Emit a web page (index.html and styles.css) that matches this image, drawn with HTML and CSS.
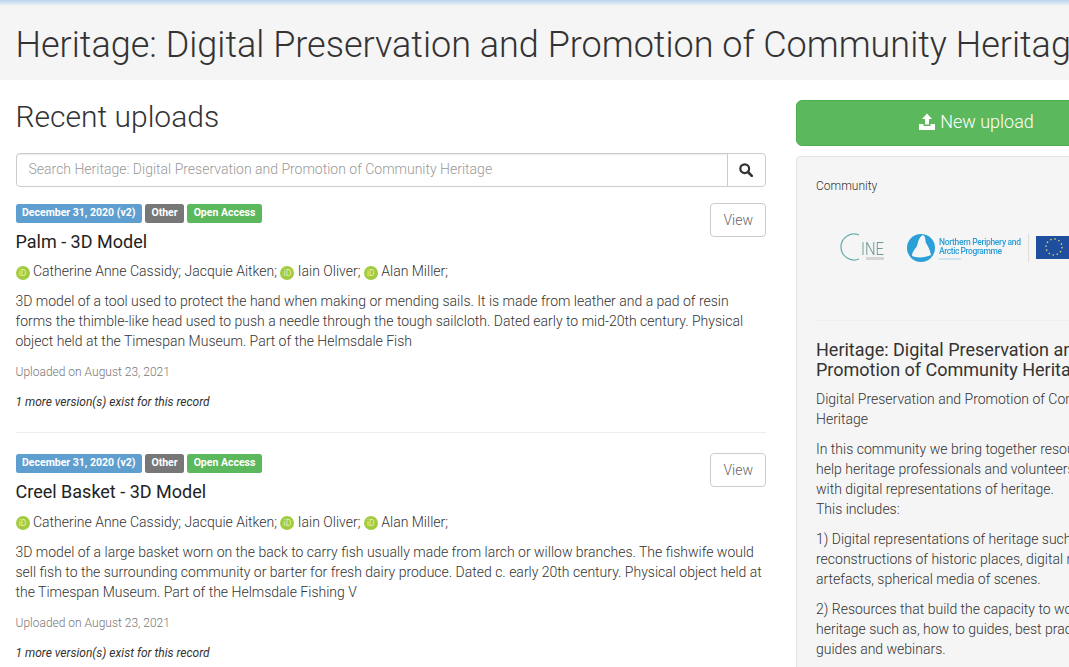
FILE: index.html
```html
<!DOCTYPE html>
<html lang="en">
<head>
  <meta charset="UTF-8">
  <title>Heritage: Digital Preservation and Promotion of Community Heritage</title>
  <link rel="stylesheet" href="styles.css">
</head>
<body>

  <div class="top-line"></div>

  <header class="page-header">
    <h1>Heritage: Digital Preservation and Promotion of Community Heritage</h1>
  </header>

  <div class="container">
    <main class="main-col">
      <h2 class="section-title">Recent uploads</h2>

      <form class="search-group">
        <input class="search-input" type="text" placeholder="Search Heritage: Digital Preservation and Promotion of Community Heritage">
        <button class="search-btn" type="button" aria-label="Search">
          <svg width="14" height="14" viewBox="0 0 14 14"><circle cx="5.7" cy="5.7" r="4.4" fill="none" stroke="#333" stroke-width="2.2"/><path d="M9 9l3.8 3.8" stroke="#333" stroke-width="2.6" stroke-linecap="round"/></svg>
        </button>
      </form>

      <article class="record">
        <div class="record-top">
          <div class="labels">
            <span class="label label-date">December 31, 2020 (v2)</span>
            <span class="label label-type">Other</span>
            <span class="label label-access">Open Access</span>
          </div>
          <a class="view-btn">View</a>
        </div>
        <h4 class="record-title">Palm - 3D Model</h4>
        <p class="authors">
          <span class="orcid">iD</span> Catherine Anne Cassidy; Jacquie Aitken; <span class="orcid">iD</span> Iain Oliver; <span class="orcid">iD</span> Alan Miller;
        </p>
        <p class="description">3D model of a tool used to protect the hand when making or mending sails. It is made from leather and a pad of resin forms the thimble-like head used to push a needle through the tough sailcloth. Dated early to mid-20th century. Physical object held at the Timespan Museum. Part of the Helmsdale Fish</p>
        <p class="uploaded">Uploaded on August 23, 2021</p>
        <p class="versions">1 more version(s) exist for this record</p>
      </article>

      <article class="record">
        <div class="record-top">
          <div class="labels">
            <span class="label label-date">December 31, 2020 (v2)</span>
            <span class="label label-type">Other</span>
            <span class="label label-access">Open Access</span>
          </div>
          <a class="view-btn">View</a>
        </div>
        <h4 class="record-title">Creel Basket - 3D Model</h4>
        <p class="authors">
          <span class="orcid">iD</span> Catherine Anne Cassidy; Jacquie Aitken; <span class="orcid">iD</span> Iain Oliver; <span class="orcid">iD</span> Alan Miller;
        </p>
        <p class="description">3D model of a large basket worn on the back to carry fish usually made from larch or willow branches. The fishwife would sell fish to the surrounding community or barter for fresh dairy produce. Dated c. early 20th century. Physical object held at the Timespan Museum. Part of the Helmsdale Fishing V</p>
        <p class="uploaded">Uploaded on August 23, 2021</p>
        <p class="versions">1 more version(s) exist for this record</p>
      </article>
    </main>

    <aside class="side-col">
      <a class="upload-btn">
        <svg width="18" height="18" viewBox="0 0 18 18"><path d="M9 0.5L14 6H11V11.5H7V6H4Z" fill="#fff"/><path d="M1 11h4.5v2h7v-2H17v6H1Z" fill="#fff"/></svg>
        New upload
      </a>

      <div class="panel">
        <div class="panel-label">Community</div>
        <div class="logos">
          <svg width="260" height="50" viewBox="0 0 260 50">
            <!-- cine logo -->
            <path d="M28 10A13 13 0 1 0 28 34" fill="none" stroke="#6aaeae" stroke-width="1.3"/>
            <text x="30" y="30" class="logo-ine" textLength="23" lengthAdjust="spacingAndGlyphs">INE</text>
            <rect x="35" y="32" width="18" height="3" fill="#d4d6d4"/>
            <!-- npa logo -->
            <circle cx="90" cy="23" r="14" fill="#2a9fd8"/>
            <path d="M92 10c-3 1-5 6-6 11c-2 3-5 6-5 10c4 2 13 2 19-1c-1-5-3-9-5-12c-1-3 0-6-3-8Z" fill="#f5f5f5"/>
            <text x="108" y="20" class="logo-npa" textLength="82">Northern Periphery and</text>
            <text x="108" y="29" class="logo-npa" textLength="63">Arctic Programme</text>
            <rect x="108" y="33" width="22" height="2" fill="#cfe4ee"/>
            <rect x="197" y="9" width="1" height="28" fill="#dedfd9"/>
            <!-- eu flag -->
            <rect x="205" y="11" width="50" height="23" fill="#1d4f9e"/>
            <circle cx="223" cy="22" r="8" fill="none" stroke="#e6d36a" stroke-width="1.4" stroke-dasharray="1.4 2.8"/>
          </svg>
        </div>
        <hr class="panel-rule">
        <h4 class="panel-title">Heritage: Digital Preservation and Promotion of Community Heritage</h4>
        <p>Digital Preservation and Promotion of Community Heritage</p>
        <p>In this community we bring together resources that help heritage professionals and volunteers to work<br>with digital representations of heritage.<br>This includes:</p>
        <p>1) Digital representations of heritage such as 3D reconstructions of historic places, digital models of artefacts, spherical media of scenes.</p>
        <p>2) Resources that build the capacity to work with heritage such as, how to guides, best practice guides and webinars.</p>
      </div>
    </aside>
  </div>

</body>
</html>
```

FILE: styles.css
```css
html, body {
  height: 667px;
  overflow: hidden;
}
body {
  margin: 0;
  font-family: Roboto, "Liberation Sans", sans-serif;
  font-weight: 300;
  font-size: 14px;
  line-height: 20px;
  color: #333;
  background-color: #fff;
}
.top-line {
  height: 6px;
  background: linear-gradient(#b9d4ee, #f5f5f5);
}
.page-header {
  background-color: #f5f5f5;
  height: 74px;
  padding-left: 15.5px;
  overflow: hidden;
  white-space: nowrap;
}
.page-header h1 {
  margin: 0;
  padding-top: 19px;
  font-size: 36px;
  font-weight: 300;
  line-height: 40px;
}
.container {
  display: grid;
  grid-template-columns: 750.5px 360px;
  column-gap: 30px;
  padding: 0 0 0 15.5px;
  width: 1170px;
}
.section-title {
  margin: 20px 0 20px;
  font-size: 30px;
  font-weight: 300;
  line-height: 33px;
}
.search-group {
  display: flex;
  height: 34px;
  margin-bottom: 17px;
}
.search-input {
  flex: 1;
  padding: 5px 12px 7px;
  border: 1px solid #ccc;
  border-radius: 4px 0 0 4px;
  font-family: inherit;
  font-weight: 300;
  font-size: 14px;
  box-shadow: inset 0 1px 1px rgba(0, 0, 0, 0.075);
}
.search-input::placeholder {
  color: #999;
}
.search-btn {
  width: 39px;
  margin-left: -1px;
  border: 1px solid #ccc;
  border-radius: 0 4px 4px 0;
  background-color: #fff;
  display: flex;
  align-items: center;
  justify-content: center;
  padding: 0 2px 1px 0;
}
.record {
  border-bottom: 1px solid #eee;
  margin-bottom: 21px;
  padding-bottom: 20.1px;
}
.record:last-child {
  border-bottom: none;
}
.record-top {
  display: flex;
  justify-content: space-between;
  align-items: flex-start;
  height: 34px;
  margin-top: -1px;
}
.labels {
  display: flex;
  gap: 3px;
  padding-top: 1px;
}
.label {
  display: block;
  height: 18.5px;
  padding: 0 6.5px;
  border-radius: 2.5px;
  color: #fff;
  font-size: 10.5px;
  font-weight: 700;
  line-height: 17.5px;
}
.label-date {
  background-color: #5f9fd0;
}
.label-type {
  background-color: #777;
}
.label-access {
  background-color: #5cb85c;
}
.view-btn {
  display: block;
  box-sizing: border-box;
  height: 34px;
  padding: 6px 12px;
  border: 1px solid #ccc;
  border-radius: 4px;
  color: #666;
  background-color: #fff;
}
.record-title {
  margin: -5px 0 9.3px;
  font-size: 18px;
  font-weight: 400;
  line-height: 20px;
  color: #222;
}
.authors {
  margin: 0 0 10px;
}
.orcid {
  display: inline-block;
  width: 14px;
  height: 14px;
  border-radius: 50%;
  background-color: #a3cb3f;
  color: #e4f0c0;
  font-size: 8.5px;
  font-weight: 400;
  line-height: 14px;
  text-align: center;
  vertical-align: middle;
}
.description {
  margin: 0 0 11px;
}
.uploaded {
  margin: 0 0 10px;
  font-size: 12px;
  color: #777;
}
.versions {
  margin: 0;
  font-size: 12px;
  font-style: italic;
  font-weight: 400;
}
.upload-btn {
  display: flex;
  align-items: center;
  justify-content: center;
  gap: 4px;
  height: 46px;
  margin-top: 20px;
  padding-bottom: 2px;
  border-radius: 6px;
  background-color: #5cb85c;
  border: 1px solid #4cae4c;
  box-sizing: border-box;
  color: #fff;
  font-size: 18px;
}
.panel {
  margin-top: 10px;
  padding: 19px;
  min-height: 600px;
  background-color: #f5f5f5;
  border: 1px solid #e3e3e3;
  border-radius: 4px;
  box-sizing: border-box;
}
.panel p {
  margin: 0 0 10px;
}
.panel-label {
  font-size: 12px;
}
.logos {
  height: 50px;
  margin-top: 29px;
  padding-left: 14.5px;
  overflow: hidden;
}
.logos svg {
  filter: blur(0.4px);
}
.logo-ine {
  font-size: 18px;
  fill: #6a9a9a;
}
.logo-npa {
  font-size: 8.5px;
  font-weight: 500;
  fill: #2a9fd8;
}
.panel-rule {
  margin: 45px 0 19px;
  border: 0;
  border-top: 1px solid #eee;
}
.panel-title {
  margin: 0 0 9px;
  font-size: 18px;
  font-weight: 400;
  line-height: 20px;
}
```
